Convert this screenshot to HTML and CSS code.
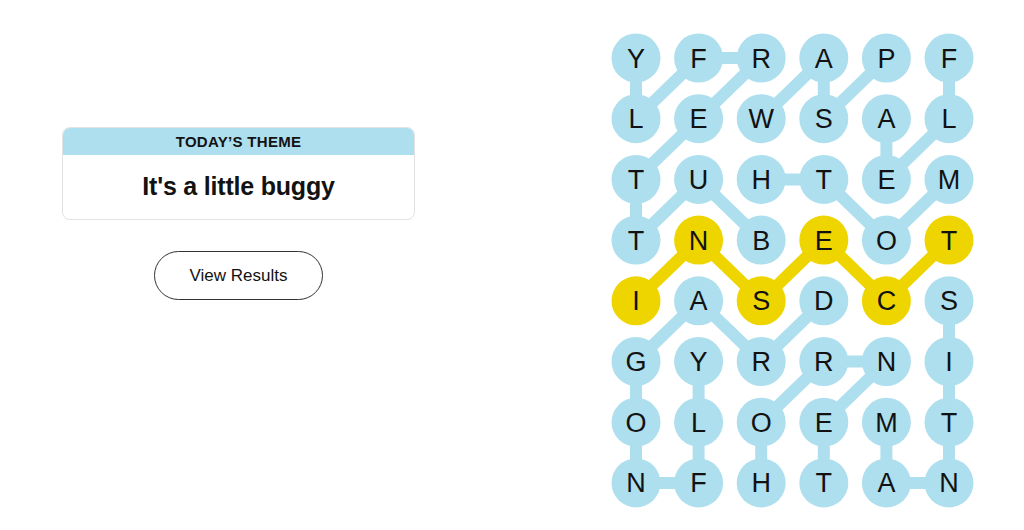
FILE: index.html
```html
<!DOCTYPE html>
<html lang="en">
<head>
  <meta charset="UTF-8">
  <meta name="viewport" content="width=device-width, initial-scale=1.0">
  <title>Strands</title>
  <link rel="stylesheet" href="styles.css">
</head>
<body>
  <main class="page">
    <section class="theme-panel">
      <div class="theme-card">
        <h2 class="theme-label">TODAY’S THEME</h2>
        <p class="theme-clue">It's a little buggy</p>
      </div>
      <button type="button" class="results-btn">View Results</button>
    </section>
    <section class="board">
      <svg id="board-svg" width="380" height="500" viewBox="0 0 380 500"></svg>
    </section>
  </main>
  <script>
    const letters = [
      'YFRAPF',
      'LEWSAL',
      'TUHTEM',
      'TNBEOT',
      'IASDCS',
      'GYRRNI',
      'OLOEMT',
      'NFHTAN'
    ];

    // each word is a list of [row, col] cells in order
    const words = [
      { spangram: false, cells: [[3,2],[2,1],[3,0],[2,0],[1,1],[0,2],[0,1],[1,0],[0,0]] },
      { spangram: false, cells: [[1,2],[0,3],[1,3],[0,4]] },
      { spangram: false, cells: [[0,5],[1,5],[2,4],[1,4]] },
      { spangram: false, cells: [[3,4],[2,3],[2,2]] },
      { spangram: false, cells: [[2,5],[3,4]] },
      { spangram: true,  cells: [[4,0],[3,1],[4,2],[3,3],[4,4],[3,5]] },
      { spangram: false, cells: [[4,3],[5,2],[4,1],[5,0],[6,0],[7,0],[7,1],[6,1],[5,1]] },
      { spangram: false, cells: [[7,2],[6,2],[5,3],[5,4],[6,3],[7,3]] },
      { spangram: false, cells: [[6,4],[7,4],[7,5],[6,5],[5,5],[4,5]] }
    ];

    const svg = document.getElementById('board-svg');
    const NS = 'http://www.w3.org/2000/svg';
    const cx = c => 34 + c * 62.6;
    const cy = r => 34 + r * 60.7;
    const spanCells = new Set();

    function el(name, attrs, cls) {
      const node = document.createElementNS(NS, name);
      for (const k in attrs) node.setAttribute(k, attrs[k]);
      if (cls) node.setAttribute('class', cls);
      svg.appendChild(node);
      return node;
    }

    words.forEach(w => {
      const cls = w.spangram ? 'link link-span' : 'link';
      for (let i = 1; i < w.cells.length; i++) {
        const [r1, c1] = w.cells[i - 1];
        const [r2, c2] = w.cells[i];
        el('line', { x1: cx(c1), y1: cy(r1), x2: cx(c2), y2: cy(r2) }, cls);
      }
      if (w.spangram) w.cells.forEach(([r, c]) => spanCells.add(r + ',' + c));
    });

    letters.forEach((row, r) => {
      row.split('').forEach((ch, c) => {
        const cls = spanCells.has(r + ',' + c) ? 'cell cell-span' : 'cell';
        el('circle', { cx: cx(c), cy: cy(r), r: 24.5 }, cls);
        const t = el('text', { x: cx(c), y: cy(r) + 9.5 }, 'cell-letter');
        t.textContent = ch;
      });
    });
  </script>
</body>
</html>
```

FILE: styles.css
```css
body {
  margin: 0;
  padding: 0;
  background-color: #fff;
  color: #121212;
  font-family: "Liberation Sans", Arial, sans-serif;
}

.page {
  display: flex;
  align-items: flex-start;
}

.theme-panel {
  width: 353px;
  margin-left: 62px;
  padding-top: 127px;
  display: flex;
  flex-direction: column;
  align-items: center;
}

.theme-card {
  width: 100%;
  box-sizing: border-box;
  border: 1px solid #e2e2e2;
  border-radius: 8px;
  overflow: hidden;
}

.theme-label {
  margin: 0;
  height: 27px;
  line-height: 28px;
  background-color: #aedfee;
  text-align: center;
  font-size: 15px;
  font-weight: 700;
  letter-spacing: 0.3px;
}

.theme-clue {
  margin: 0;
  height: 64px;
  line-height: 63px;
  text-align: center;
  font-size: 25px;
  font-weight: 700;
  letter-spacing: -0.2px;
}

.results-btn {
  margin-top: 31px;
  width: 169px;
  height: 49px;
  border: 1px solid #333;
  border-radius: 25px;
  background: #fff;
  color: #121212;
  font-family: inherit;
  font-size: 17px;
  cursor: pointer;
}

.board {
  margin-left: 187px;
  margin-top: 24px;
}

.board svg {
  display: block;
}

.link {
  stroke: #aedfee;
  stroke-width: 12;
}

.link-span {
  stroke: #efd500;
}

.cell {
  fill: #aedfee;
}

.cell-span {
  fill: #efd500;
}

.cell-letter {
  font-family: "Liberation Sans", Arial, sans-serif;
  font-size: 27px;
  fill: #121212;
  text-anchor: middle;
}
```
